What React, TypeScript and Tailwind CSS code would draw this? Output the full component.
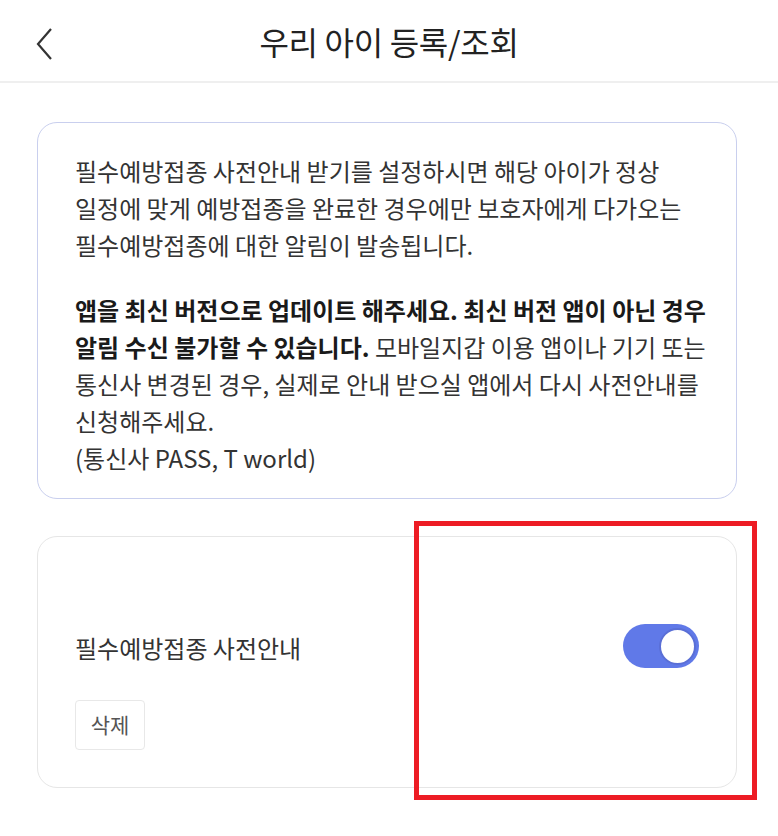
import React from 'react';

const font = { fontFamily: '"Noto Sans CJK KR", "Noto Sans", sans-serif' };

export default function App() {
  return (
    <div className="relative w-[778px] h-[836px] bg-white overflow-hidden" style={font}>
      {/* Header */}
      <div className="relative h-[83px] flex items-center justify-center border-b-2 border-[#efefef]">
        <button className="absolute left-[30px] top-[26px] w-[28px] h-[36px] flex items-center justify-center">
          <svg width="20" height="34" viewBox="0 0 20 34" fill="none">
            <polyline points="17,2 4,17 17,32" stroke="#333" strokeWidth="2.2" strokeLinejoin="miter" />
          </svg>
        </button>
        <h1 className="text-[32px] text-[#222] font-normal tracking-[-0.3px]">우리 아이 등록/조회</h1>
      </div>

      {/* Info card */}
      <div className="ml-[37px] mt-[39px] w-[700px] rounded-[20px] border-[1.5px] border-[#c9cfee] pl-[37px] pt-[29px] pb-[22px] text-[24px] leading-[37px] text-[#333]">
        <p className="whitespace-nowrap">
          필수예방접종 사전안내 받기를 설정하시면 해당 아이가 정상<br />
          일정에 맞게 예방접종을 완료한 경우에만 보호자에게 다가오는<br />
          필수예방접종에 대한 알림이 발송됩니다.
        </p>
        <p className="mt-[28px] whitespace-nowrap">
          <b className="font-bold text-[#1a1a1a]">앱을 최신 버전으로 업데이트 해주세요. 최신 버전 앱이 아닌 경우</b><br />
          <b className="font-bold text-[#1a1a1a]">알림 수신 불가할 수 있습니다.</b> 모바일지갑 이용 앱이나 기기 또는<br />
          통신사 변경된 경우, 실제로 안내 받으실 앱에서 다시 사전안내를<br />
          신청해주세요.<br />
          (통신사 PASS, T world)
        </p>
      </div>

      {/* Child card */}
      <div className="ml-[37px] mt-[37px] w-[700px] rounded-[20px] border-[1.5px] border-[#e6e6e6] pl-[37px] pr-[37px] pt-[87px] pb-[37px]">
        <div className="h-[44px] flex items-center justify-between">
          <span className="text-[24px] text-[#333] mt-[4px]">필수예방접종 사전안내</span>
          <div className="w-[76px] h-[44px] rounded-full bg-[#6079e8] flex items-center justify-end pr-[3px]">
            <div className="w-[37px] h-[37px] rounded-full bg-white border-[2px] border-[#5a6fd6]" />
          </div>
        </div>
        <button className="mt-[32px] w-[70px] h-[50px] rounded-[4px] border-[1.5px] border-[#e8e8e8] text-[21px] text-[#555] flex items-center justify-center">
          삭제
        </button>
      </div>

      {/* Red highlight */}
      <div className="absolute left-[414px] top-[521px] w-[343px] h-[279px] border-[5px] border-[#ed1c24] pointer-events-none" />
    </div>
  );
}
